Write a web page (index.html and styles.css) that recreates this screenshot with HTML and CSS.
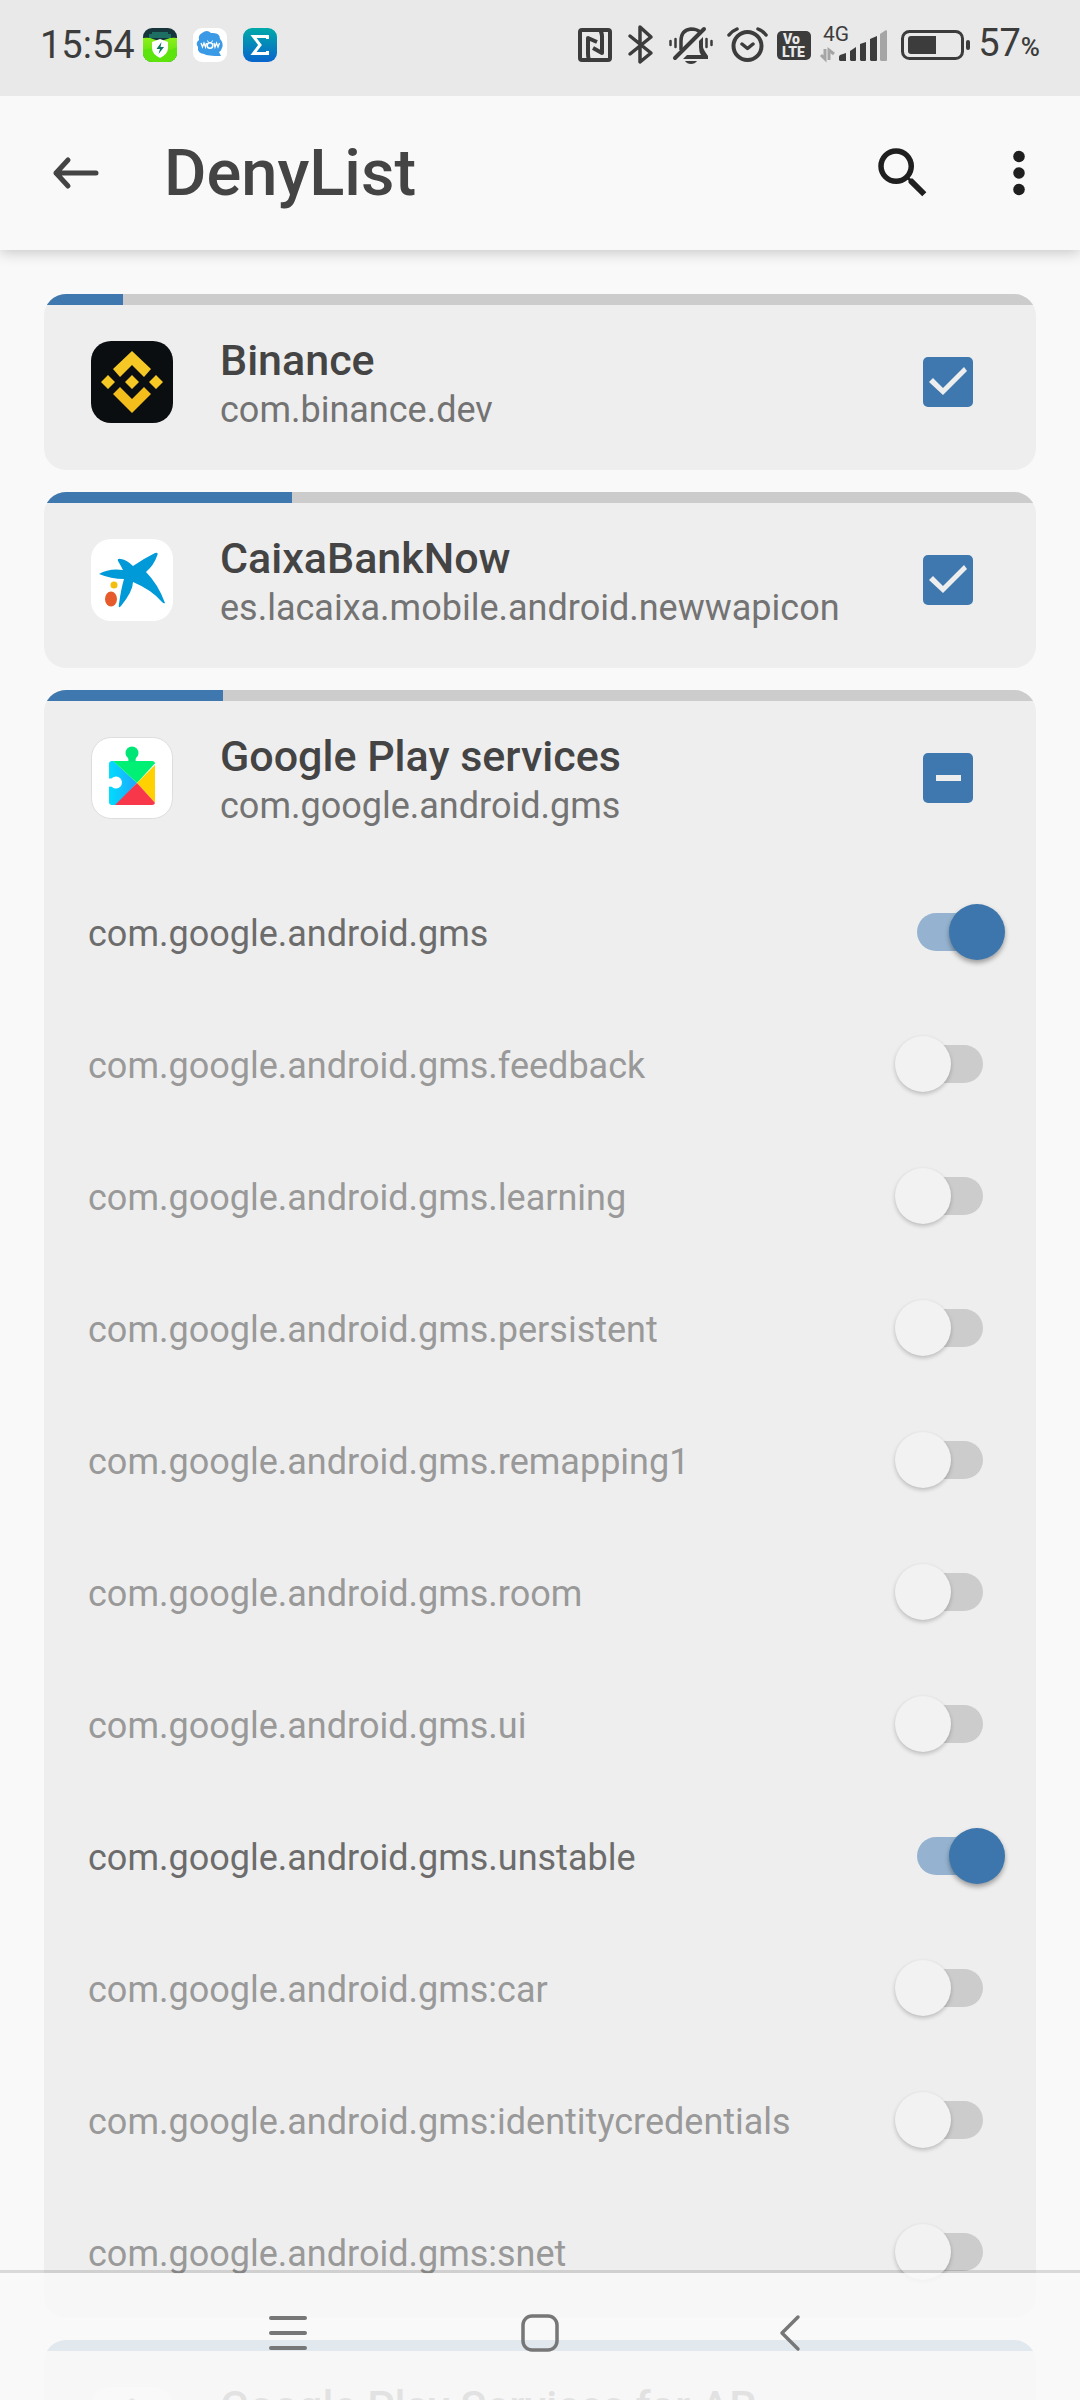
FILE: index.html
```html
<!DOCTYPE html>
<html lang="en">
<head>
  <meta charset="UTF-8">
  <meta name="viewport" content="width=device-width, initial-scale=1">
  <title>DenyList</title>
  <link rel="stylesheet" href="styles.css">
</head>
<body>

  <div class="status-bar">
    <span class="clock">15:54</span>
    <div class="notifications">
      <svg width="34" height="34" viewBox="0 0 34 34">
        <defs>
          <linearGradient id="grass" x1="0" y1="0" x2="0" y2="1">
            <stop offset="0" stop-color="#8cf01c"/>
            <stop offset="1" stop-color="#4fdc0a"/>
          </linearGradient>
          <clipPath id="tile"><rect width="34" height="34" rx="9"/></clipPath>
        </defs>
        <g clip-path="url(#tile)">
          <rect width="34" height="34" fill="#17363c"/>
          <path d="M9 4h16v2h3v4H6V6h3z" fill="#1d6e63"/>
          <path d="M0 10q6-1 10 1 7 3 14 0 5-2 10-1v24H0z" fill="url(#grass)"/>
          <path d="M0 22q9-3 16 0t18-3v15H0z" fill="#5ce40c"/>
        </g>
        <path d="M17 11l8 3v6q0 6-8 10-8-4-8-10v-6z" fill="#fff"/>
        <path d="M18.500 14l-5 7h3.500l-1.500 5 5.500-7h-3.500z" fill="#0d7466"/>
      </svg>
      <svg width="34" height="34" viewBox="0 0 34 34">
        <rect width="34" height="34" rx="9" fill="#fff"/>
        <path d="M9 5q5-4 9 0 9-1 9 6 4 4 2 9-1 3-3 4l2 4q-14 0-17-2-7-1-6-7-3-4 1-7-1-5 3-7z" fill="#3b9ae6"/>
        <path d="M8 15l1.500 4 1.500-4 1.500 4 1-4M21 15l1 4 1.500-4 1.500 4 1.500-4" fill="none" stroke="#fff" stroke-width="1.300"/>
        <circle cx="17" cy="17.500" r="2.800" fill="none" stroke="#fff" stroke-width="1.500"/>
        <path d="M14.500 12.500l1 2M19.500 12.500l-1 2" stroke="#fff"/>
      </svg>
      <svg width="34" height="34" viewBox="0 0 34 34">
        <defs>
          <linearGradient id="sea" x1="0" y1="0" x2="0" y2="1">
            <stop offset="0" stop-color="#00a9a9"/>
            <stop offset="1" stop-color="#0864cc"/>
          </linearGradient>
        </defs>
        <rect width="34" height="34" rx="9" fill="url(#sea)"/>
        <path d="M24.500 11V8.500H10.500L17 17l-6.500 8.500h14V23" fill="none" stroke="#fff" stroke-width="3"/>
      </svg>
    </div>

    <div class="system-icons">
      <!-- NFC -->
      <svg width="44" height="50" viewBox="576 20 44 50">
        <rect x="580" y="30" width="30" height="30" rx="2" fill="none" stroke="#3c3c3c" stroke-width="4"/>
        <path d="M589 60q-1-3-1-6V38l9 4M600 30q2 3 2 6v17l-9-5" fill="none" stroke="#3c3c3c" stroke-width="4" stroke-linejoin="round"/>
      </svg>
      <!-- Bluetooth -->
      <svg width="42" height="50" viewBox="620 20 42 50">
        <path d="M630 36l21 17-11 9V27l11 10-21 17" fill="none" stroke="#3c3c3c" stroke-width="3.500" stroke-linejoin="round" stroke-linecap="round"/>
      </svg>
      <!-- Vibrate / muted bell -->
      <svg width="58" height="50" viewBox="662 20 58 50">
        <path d="M681 50V41q0-11 10-12 6 0 9 3" fill="none" stroke="#3c3c3c" stroke-width="3.500"/>
        <path d="M699 41l4-4v10q0 2 5 9v3h-25l4-4h14q-2-3-2-8z" fill="#3c3c3c"/>
        <path d="M675 58l29-29" stroke="#3c3c3c" stroke-width="4" stroke-linecap="round"/>
        <path d="M670.500 41v4M675.500 39v8M706.500 39v8M711.500 41v4" stroke="#3c3c3c" stroke-width="2.500" stroke-linecap="round"/>
        <path d="M685 61h12q-2 3-6 3t-6-3z" fill="#3c3c3c"/>
      </svg>
      <!-- Alarm -->
      <svg width="53" height="50" viewBox="720 20 53 50">
        <circle cx="747.500" cy="46" r="14" fill="none" stroke="#3c3c3c" stroke-width="4"/>
        <path d="M729 35q3-4 8-6M766 35q-3-4-8-6M742 44l5.500 4.500L753 44" fill="none" stroke="#3c3c3c" stroke-width="3.500" stroke-linecap="round" stroke-linejoin="round"/>
      </svg>
      <!-- VoLTE -->
      <svg width="43" height="50" viewBox="773 20 43 50">
        <rect x="777" y="31" width="34" height="29" rx="5" fill="#3c3c3c"/>
        <text class="volte" x="783" y="44">Vo</text>
        <text class="volte" x="782" y="57">LTE</text>
      </svg>
      <!-- Signal -->
      <svg width="78" height="50" viewBox="816 20 78 50">
        <text class="network" x="823" y="41">4G</text>
        <path d="M825 49v10l-4-4M829 60V50l5 4" fill="none" stroke="#a5a5a5" stroke-width="3"/>
        <g fill="#3c3c3c">
          <path d="M839 60v-3q0-1 1-2l6-2v8h-6z"/>
          <path d="M850 60V51l6-4v13q0 1-1 1h-4z"/>
          <path d="M860 60V44l6-2v18q0 1-1 1h-4z"/>
          <path d="M870 60V39l7-3v24q0 1-1 1h-5z"/>
        </g>
        <path d="M880 60V34l6-4 1 1v29q0 1-1 1h-5z" fill="#a5a5a5"/>
      </svg>
      <!-- Battery -->
      <svg width="80" height="50" viewBox="894 20 80 50">
        <rect x="902.500" y="31.500" width="60" height="27" rx="7" fill="none" stroke="#3c3c3c" stroke-width="3"/>
        <path d="M911 36h25v18h-25q-3 0-3-3V39q0-3 3-3z" fill="#3c3c3c"/>
        <rect x="966" y="40" width="4" height="10" rx="2" fill="#3c3c3c"/>
      </svg>
      <span class="battery-level">57<small>%</small></span>
    </div>
  </div>

  <header class="app-bar">
    <button class="icon-button" aria-label="Back">
      <svg width="66" height="66" viewBox="0 0 66 66">
        <path d="M52 33H12M24 20L12 33l12 13" fill="none" stroke="#444" stroke-width="5" stroke-linecap="round" stroke-linejoin="round"/>
      </svg>
    </button>
    <h1 class="title">DenyList</h1>
    <div class="actions">
      <button class="icon-button" aria-label="Search">
        <svg width="66" height="66" viewBox="0 0 24 24">
          <path fill="#1f1f1f" d="M15.500 14h-.79l-.28-.27A6.471 6.471 0 0 0 16 9.500 6.500 6.500 0 1 0 9.500 16c1.610 0 3.090-.59 4.230-1.570l.27.28v.79l5 4.990L20.490 19l-4.990-5zm-6 0C7.010 14 5 11.990 5 9.500S7.010 5 9.500 5 14 7.010 14 9.500 11.990 14 9.500 14z"/>
        </svg>
      </button>
      <button class="icon-button" aria-label="More options">
        <svg width="66" height="66" viewBox="0 0 24 24">
          <g fill="#1f1f1f">
            <circle cx="12" cy="6" r="2.100"/>
            <circle cx="12" cy="12" r="2.100"/>
            <circle cx="12" cy="18" r="2.100"/>
          </g>
        </svg>
      </button>
    </div>
  </header>

  <main class="list">

    <section class="card">
      <div class="progress"><div class="progress-fill" style="width: 8%"></div></div>
      <div class="app">
        <svg class="app-icon" width="82" height="82" viewBox="0 0 82 82">
          <rect width="82" height="82" rx="20" fill="#0b0e11"/>
          <g fill="#f5c826">
            <path d="M41 10l19 18-7 8-12-12-12 12-7-8z"/>
            <path d="M22 53l7-7 12 12 12-12 7 7-19 19z" fill="#f3be1c"/>
            <path d="M17 34l7 7-7 7-7-7zM41 34l7 7-7 7-7-7zM65 34l7 7-7 7-7-7z"/>
          </g>
        </svg>
        <label class="app-text" for="binance">
          <span class="app-name">Binance</span>
          <span class="app-package">com.binance.dev</span>
        </label>
        <input class="check" type="checkbox" id="binance" checked>
      </div>
    </section>

    <section class="card">
      <div class="progress"><div class="progress-fill" style="width: 25%"></div></div>
      <div class="app">
        <svg class="app-icon" width="82" height="82" viewBox="0 0 82 82">
          <rect width="82" height="82" rx="20" fill="#fff"/>
          <path fill="#009ad8" d="M8 35q10-6 24-4-2-4-5-9-1-3 3-2 6 1 12 7 10-7 22-13 4-1 2 3-3 9-11 16 12 12 19 31-1 1-3-1-10-12-29-20 0 9-12 24-3 3-2-2 2-15 5-25-13 0-25-5z"/>
          <circle cx="23" cy="46" r="3.500" fill="#f2bd0c"/>
          <ellipse cx="20" cy="60" rx="6" ry="7.500" fill="#e55b2b"/>
        </svg>
        <label class="app-text" for="caixa">
          <span class="app-name">CaixaBankNow</span>
          <span class="app-package">es.lacaixa.mobile.android.newwapicon</span>
        </label>
        <input class="check" type="checkbox" id="caixa" checked>
      </div>
    </section>

    <section class="card">
      <div class="progress"><div class="progress-fill" style="width: 18%"></div></div>
      <div class="app">
        <svg class="app-icon" width="82" height="82" viewBox="0 0 82 82">
          <defs>
            <clipPath id="puzzle"><rect x="18" y="24" width="46" height="44" rx="3"/></clipPath>
            <linearGradient id="sky"><stop offset="0" stop-color="#00dcff"/><stop offset="1" stop-color="#1fa8fb"/></linearGradient>
          </defs>
          <rect x="0.500" y="0.500" width="81" height="81" rx="20" fill="#fff" stroke="#ddd"/>
          <g clip-path="url(#puzzle)">
            <path d="M18 20l28 26-24 26h-4z" fill="url(#sky)"/>
            <path d="M20 22h48l-22 24z" fill="#00f076"/>
            <path d="M68 24v46L46 46z" fill="#ffd100"/>
            <path d="M22 70l24-24 22 24z" fill="#f9374a"/>
          </g>
          <path d="M37 25q1-2 0-4a6.500 6.500 0 1 1 8 0q-1 2 0 4z" fill="#00e676"/>
          <path d="M17 41q3 1 4 0a6 6 0 1 1 0 9q-1-1-4 0z" fill="#fff"/>
        </svg>
        <label class="app-text" for="gms">
          <span class="app-name">Google Play services</span>
          <span class="app-package">com.google.android.gms</span>
        </label>
        <input class="check" type="checkbox" id="gms">
      </div>

      <ul class="processes">
        <li class="process">
          <label class="process-name on" for="p1">com.google.android.gms</label>
          <input class="switch" type="checkbox" id="p1" checked>
        </li>
        <li class="process">
          <label class="process-name" for="p2">com.google.android.gms.feedback</label>
          <input class="switch" type="checkbox" id="p2">
        </li>
        <li class="process">
          <label class="process-name" for="p3">com.google.android.gms.learning</label>
          <input class="switch" type="checkbox" id="p3">
        </li>
        <li class="process">
          <label class="process-name" for="p4">com.google.android.gms.persistent</label>
          <input class="switch" type="checkbox" id="p4">
        </li>
        <li class="process">
          <label class="process-name" for="p5">com.google.android.gms.remapping1</label>
          <input class="switch" type="checkbox" id="p5">
        </li>
        <li class="process">
          <label class="process-name" for="p6">com.google.android.gms.room</label>
          <input class="switch" type="checkbox" id="p6">
        </li>
        <li class="process">
          <label class="process-name" for="p7">com.google.android.gms.ui</label>
          <input class="switch" type="checkbox" id="p7">
        </li>
        <li class="process">
          <label class="process-name on" for="p8">com.google.android.gms.unstable</label>
          <input class="switch" type="checkbox" id="p8" checked>
        </li>
        <li class="process">
          <label class="process-name" for="p9">com.google.android.gms:car</label>
          <input class="switch" type="checkbox" id="p9">
        </li>
        <li class="process">
          <label class="process-name" for="p10">com.google.android.gms:identitycredentials</label>
          <input class="switch" type="checkbox" id="p10">
        </li>
        <li class="process">
          <label class="process-name" for="p11">com.google.android.gms:snet</label>
          <input class="switch" type="checkbox" id="p11">
        </li>
      </ul>
    </section>

    <section class="card">
      <div class="progress"><div class="progress-fill" style="width: 100%"></div></div>
      <div class="app">
        <svg class="app-icon" width="82" height="82" viewBox="0 0 82 82">
          <rect width="82" height="82" rx="20" fill="#fff"/>
          <path d="M41 11l26 15v30L41 71 15 56V26z" fill="#5f6368"/>
        </svg>
        <label class="app-text" for="ar">
          <span class="app-name">Google Play Services for AR</span>
        </label>
        <input class="check" type="checkbox" id="ar" checked>
      </div>
    </section>

  </main>

  <nav class="nav-bar">
    <button class="nav-button" aria-label="Recent apps">
      <svg width="40" height="40" viewBox="0 0 40 40">
        <path d="M3 5h34M3 20h34M3 35h34" stroke="#777" stroke-width="4" stroke-linecap="round"/>
      </svg>
    </button>
    <button class="nav-button" aria-label="Home">
      <svg width="40" height="40" viewBox="0 0 40 40">
        <rect x="3" y="3" width="34" height="34" rx="9" fill="none" stroke="#777" stroke-width="3.500"/>
      </svg>
    </button>
    <button class="nav-button" aria-label="Back">
      <svg width="40" height="40" viewBox="0 0 40 40">
        <path d="M26 4L10 20l16 16" fill="none" stroke="#777" stroke-width="3.500" stroke-linecap="round" stroke-linejoin="round"/>
      </svg>
    </button>
  </nav>

  <script>
    // only some of the processes are on the list
    document.getElementById("gms").indeterminate = true;
  </script>

</body>
</html>
```
FILE: styles.css
```css
* {
  box-sizing: border-box;
}

body {
  margin: 0;
  height: 100vh;
  display: flex;
  flex-direction: column;
  overflow: hidden;
  background: #f9f9f9;
  color: #444;
  font-family: Roboto, "Liberation Sans", sans-serif;
}

svg {
  display: block;
  flex: none;
}

button {
  padding: 0;
  border: none;
  background: none;
  cursor: pointer;
}

/* status bar */

.status-bar {
  flex: none;
  position: relative;
  z-index: 2;
  height: 96px;
  padding: 0 40px 6px;
  display: flex;
  align-items: center;
  background: #e9e9e9;
  color: #3c3c3c;
}

.clock,
.battery-level {
  font-size: 38px;
  line-height: 44px;
}

.battery-level {
  margin-left: 4px;
}

.battery-level small {
  font-size: 26px;
  font-weight: 500;
}

.notifications {
  display: flex;
  gap: 16px;
  margin-left: 8px;
}

.system-icons {
  display: flex;
  align-items: center;
  margin-left: auto;
}

.volte {
  font-size: 14px;
  font-weight: 900;
  fill: #e9e9e9;
}

.network {
  font-size: 21px;
  fill: #3c3c3c;
}

/* app bar */

.app-bar {
  flex: none;
  position: relative;
  z-index: 1;
  height: 154px;
  padding: 0 28px 0 44px;
  display: flex;
  align-items: center;
  background: #f9f9f9;
  box-shadow: 0 2px 14px rgba(0, 0, 0, 0.22);
}

.title {
  margin: 0 0 0 54px;
  font-size: 65px;
  font-weight: 500;
}

.actions {
  display: flex;
  gap: 50px;
  margin-left: auto;
}

/* list */

.list {
  flex: 1;
  min-height: 0;
  padding: 44px;
  display: flex;
  flex-direction: column;
  gap: 22px;
  overflow-y: auto;
  scrollbar-width: none;
}

.card {
  flex: none;
  border-radius: 22px;
  background: #eee;
  overflow: hidden;
}

.progress {
  height: 11px;
  background: #ccc;
}

.progress-fill {
  height: 100%;
  background: #3f78ae;
}

.app {
  display: flex;
  align-items: center;
  padding: 27px 63px 38px 47px;
}

.app-text {
  flex: 1;
  min-height: 100px;
  margin-left: 47px;
  display: flex;
  flex-direction: column;
}

.app-name {
  font-size: 43px;
  font-weight: 500;
  line-height: 56px;
}

.app-package {
  font-size: 36px;
  line-height: 44px;
  color: #737373;
}

.check {
  appearance: none;
  width: 50px;
  height: 50px;
  margin: 0;
  border: 2px solid #757575;
  border-radius: 5px;
}

.check:checked,
.check:indeterminate {
  border: none;
  background: #3f78ae;
}

.check::before {
  content: "";
  display: none;
  width: 50px;
  height: 50px;
  background: #eee;
}

.check:checked::before {
  display: block;
  clip-path: polygon(6px 25px, 10px 21px, 20px 31px, 41px 10px, 44px 14px, 20px 38px);
}

.check:indeterminate::before {
  display: block;
  clip-path: inset(22px 12px 22px 13px);
}

/* processes */

.processes {
  margin: 0;
  padding: 0;
  list-style: none;
}

.process {
  height: 132px;
  padding: 0 53px 0 44px;
  display: flex;
  align-items: center;
}

.process-name {
  flex: 1;
  padding-top: 4px;
  font-size: 36px;
  line-height: 48px;
  color: #999;
}

.process-name.on {
  color: #6c6c6c;
}

.switch {
  appearance: none;
  position: relative;
  width: 66px;
  height: 38px;
  margin: 0;
  border-radius: 19px;
  background: #ccc;
}

.switch::before {
  content: "";
  position: absolute;
  top: -9px;
  left: -22px;
  width: 56px;
  height: 56px;
  border-radius: 50%;
  background: #f2f2f2;
  box-shadow: 0 2px 4px rgba(0, 0, 0, 0.22);
}

.switch:checked {
  background: #95b3d0;
}

.switch:checked::before {
  left: 32px;
  background: #3c76ad;
  box-shadow: 0 3px 5px rgba(0, 0, 0, 0.35);
}

/* navigation bar */

.nav-bar {
  position: fixed;
  left: 0;
  right: 0;
  bottom: 0;
  z-index: 2;
  height: 130px;
  padding-bottom: 8px;
  display: flex;
  justify-content: center;
  align-items: center;
  border-top: 3px solid rgba(0, 0, 0, 0.125);
  background: rgba(248, 248, 248, 0.88);
  background-clip: padding-box;
}

.nav-button {
  width: 252px;
  height: 80px;
  display: flex;
  justify-content: center;
  align-items: center;
}
```
